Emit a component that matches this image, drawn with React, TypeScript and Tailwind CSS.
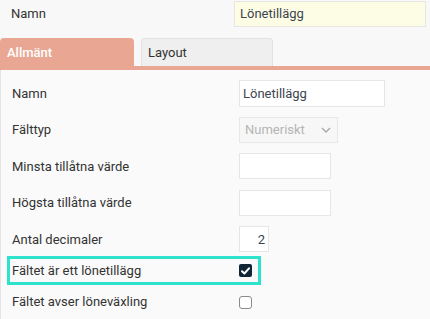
import React from "react";

const font = { fontFamily: "Roboto, 'Noto Sans', sans-serif" };

function Check({ checked }: { checked: boolean }) {
  if (checked)
    return (
      <div className="w-[13px] h-[13px] rounded-[2px] bg-[#102536] flex items-center justify-center">
        <svg width="9" height="8" viewBox="0 0 9 8">
          <path d="M1 4.2 L3.4 6.5 L8 1.3" stroke="#fff" strokeWidth="2" fill="none" strokeLinecap="round" strokeLinejoin="round" />
        </svg>
      </div>
    );
  return <div className="w-[13px] h-[13px] rounded-[3px] border-[1.5px] border-[#8a8a8a] bg-white" />;
}

function Row({ label, children }: { label: string; children?: React.ReactNode }) {
  return (
    <div className="flex items-center h-[36.5px]">
      <div className="w-[238px] pl-[11px] text-[13px] text-[#333]">{label}</div>
      {children}
    </div>
  );
}

export default function App() {
  return (
    <div className="w-[430px] h-[319px] bg-[#f8f8f8] overflow-hidden text-[13px] text-[#333]" style={font}>
      <div className="flex items-center h-[27px] pt-[1px]">
        <div className="w-[234px] pl-[11px]">Namn</div>
        <div className="w-[192px] h-[26px] bg-[#fdfde6] border border-[#e6e6e2] flex items-center pl-[5px] text-[#3d4550]">
          Lönetillägg
        </div>
      </div>
      <div className="flex items-end h-[39px]">
        <div className="w-[134px] h-[28px] bg-[#e9a793] rounded-t-[4px] flex items-center pl-[7px] pt-[1px] text-white font-medium">
          Allmänt
        </div>
        <div className="ml-[7px] w-[132px] h-[28px] bg-[#efefef] border border-b-0 border-[#e2e2e2] rounded-t-[4px] flex items-center pl-[6px] pt-[1px] text-[#333]">
          Layout
        </div>
      </div>
      <div className="h-[4px] bg-[#e9a793]" />
      <div className="border-l border-[#e4e4e4] bg-[#fafafa] pt-[5px] h-[260px]">
        <Row label="Namn">
          <div className="w-[146px] h-[27px] bg-white border border-[#e6e6e6] flex items-center pl-[3px] text-[#3d4550]">
            Lönetillägg
          </div>
        </Row>
        <Row label="Fälttyp">
          <div className="w-[99px] h-[26px] bg-[#f7f7f7] border border-[#e8e8e8] flex items-center justify-between pl-[5px] pr-[6px] text-[#b5b5b5]">
            <span>Numeriskt</span>
            <svg width="10" height="6" viewBox="0 0 10 6">
              <path d="M1 1 L5 5 L9 1" stroke="#a8a8a8" strokeWidth="1.4" fill="none" />
            </svg>
          </div>
        </Row>
        <Row label="Minsta tillåtna värde">
          <div className="w-[92px] h-[26px] bg-white border border-[#e6e6e6]" />
        </Row>
        <Row label="Högsta tillåtna värde">
          <div className="w-[92px] h-[26px] bg-white border border-[#e6e6e6]" />
        </Row>
        <Row label="Antal decimaler">
          <div className="w-[30px] h-[26px] bg-white border border-[#e6e6e6] flex items-center justify-end pr-[3px] text-[#3d4550]">
            2
          </div>
        </Row>
        <div className="ml-[6px] -mt-[1.5px] w-[254px] h-[29px] border-[3px] border-[#2ee3cd] flex items-center">
          <div className="w-[229px] pl-[2px] text-[#333]">Fältet är ett lönetillägg</div>
          <Check checked />
        </div>
        <div className="flex items-center h-[34px]">
          <div className="w-[238px] pl-[11px] text-[#333]">Fältet avser löneväxling</div>
          <Check checked={false} />
        </div>
      </div>
    </div>
  );
}
